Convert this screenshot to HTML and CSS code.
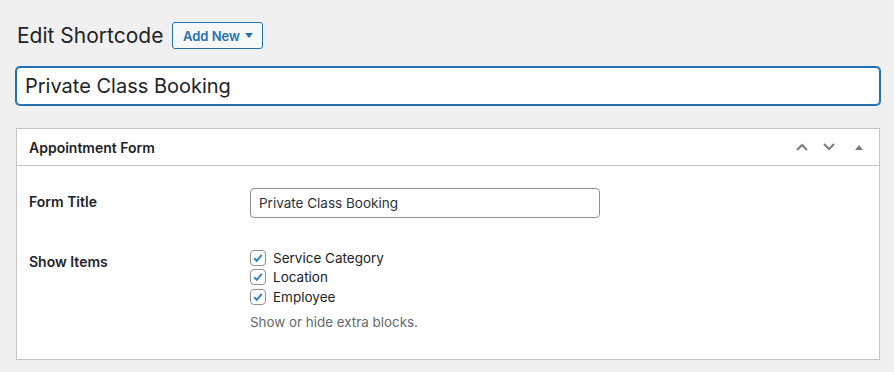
FILE: index.html
```html
<!DOCTYPE html>
<html lang="en">
<head>
    <meta charset="UTF-8">
    <meta name="viewport" content="width=device-width, initial-scale=1.0">
    <title>Edit Shortcode</title>
    <link rel="stylesheet" href="styles.css">
</head>
<body>
    <div class="wrap">
        <div class="page-head">
            <h1>Edit Shortcode</h1>
            <button class="add-new" type="button">Add New <span class="caret"></span></button>
        </div>

        <input class="title-input" type="text" value="Private Class Booking">

        <div class="postbox">
            <div class="postbox-header">
                <h2>Appointment Form</h2>
                <div class="handle-actions">
                    <svg width="14" height="10" viewBox="0 0 14 10"><path d="M2 8 L7 3 L12 8" fill="none" stroke="#787c82" stroke-width="2"/></svg>
                    <svg width="14" height="10" viewBox="0 0 14 10"><path d="M2 2 L7 7 L12 2" fill="none" stroke="#787c82" stroke-width="2"/></svg>
                    <svg class="toggle" width="10" height="8" viewBox="0 0 10 8"><path d="M1 7 L5 2 L9 7 Z" fill="#787c82"/></svg>
                </div>
            </div>
            <div class="inside">
                <div class="form-row">
                    <div class="row-label">Form Title</div>
                    <div class="row-field">
                        <input class="regular-text" type="text" value="Private Class Booking">
                    </div>
                </div>
                <div class="form-row">
                    <div class="row-label">Show Items</div>
                    <div class="row-field">
                        <label class="check"><span class="box"><svg width="12" height="12" viewBox="0 0 12 12"><path d="M2.2 6.2 L4.8 8.8 L9.8 2.8" fill="none" stroke="#3582c4" stroke-width="2"/></svg></span>Service Category</label>
                        <label class="check"><span class="box"><svg width="12" height="12" viewBox="0 0 12 12"><path d="M2.2 6.2 L4.8 8.8 L9.8 2.8" fill="none" stroke="#3582c4" stroke-width="2"/></svg></span>Location</label>
                        <label class="check"><span class="box"><svg width="12" height="12" viewBox="0 0 12 12"><path d="M2.2 6.2 L4.8 8.8 L9.8 2.8" fill="none" stroke="#3582c4" stroke-width="2"/></svg></span>Employee</label>
                        <p class="description">Show or hide extra blocks.</p>
                    </div>
                </div>
            </div>
        </div>
    </div>
</body>
</html>
```

FILE: styles.css
```css
body {
    margin: 0;
    background-color: #f0f0f1;
    font-family: Inter, "Liberation Sans", Arial, sans-serif;
    color: #1d2327;
    font-size: 13px;
}
.wrap {
    padding: 0 14px 0 16px;
}
.page-head {
    display: flex;
    align-items: center;
    gap: 9px;
    padding-top: 22px;
    height: 27px;
    margin-bottom: 18px;
}
h1 {
    margin: 0;
    font-size: 21px;
    font-weight: 400;
    padding-left: 1px;
}
.add-new {
    height: 27px;
    width: 91px;
    border: 1px solid #2271b1;
    border-radius: 3px;
    background-color: #f6f7f7;
    color: #2271b1;
    font-family: inherit;
    font-size: 13px;
    font-weight: 600;
    padding: 0 8px;
    display: flex;
    align-items: center;
    justify-content: center;
    gap: 5px;
}
.caret {
    width: 0;
    height: 0;
    border-left: 4px solid transparent;
    border-right: 4px solid transparent;
    border-top: 5px solid #2271b1;
}
.title-input {
    display: block;
    box-sizing: border-box;
    width: 100%;
    height: 38px;
    margin: 0 0 23px;
    padding: 3px 8px;
    border: 1px solid #2271b1;
    box-shadow: 0 0 0 1px #2271b1;
    border-radius: 4px;
    font-family: inherit;
    font-size: 20px;
    color: #1d2327;
    background: white;
    outline: none;
}
.postbox {
    background: white;
    border: 1px solid #c3c4c7;
    box-shadow: 0 1px 1px rgba(0,0,0,0.04);
}
.postbox-header {
    display: flex;
    align-items: center;
    justify-content: space-between;
    height: 36px;
    padding: 0 12px;
    border-bottom: 1px solid #c3c4c7;
}
.postbox-header h2 {
    margin: 0;
    font-size: 14px;
    font-weight: 600;
}
.handle-actions {
    display: flex;
    align-items: center;
    gap: 13px;
    margin-right: 3px;
}
.handle-actions .toggle {
    margin-left: 5px;
}
.inside {
    padding: 7px 12px 12px;
}
.form-row {
    display: grid;
    grid-template-columns: 211px 1fr;
}
.row-label {
    padding: 20px 10px 20px 0;
    font-size: 14px;
    font-weight: 600;
    line-height: 18px;
}
.row-field {
    padding: 15px 10px;
}
.regular-text {
    box-sizing: border-box;
    width: 350px;
    height: 30px;
    padding: 0 8px;
    border: 1px solid #8c8f94;
    border-radius: 4px;
    font-family: inherit;
    font-size: 13.5px;
    color: #2c3338;
}
.check {
    display: flex;
    align-items: center;
    height: 19.5px;
    font-size: 13.5px;
    color: #1d2327;
}
.box {
    box-sizing: border-box;
    width: 16px;
    height: 16px;
    border: 1px solid #8c8f94;
    border-radius: 4px;
    margin-right: 7px;
    display: flex;
    align-items: center;
    justify-content: center;
}
.description {
    margin: 5px 0 0;
    color: #646970;
    font-size: 13.4px;
    line-height: 20px;
}
```
